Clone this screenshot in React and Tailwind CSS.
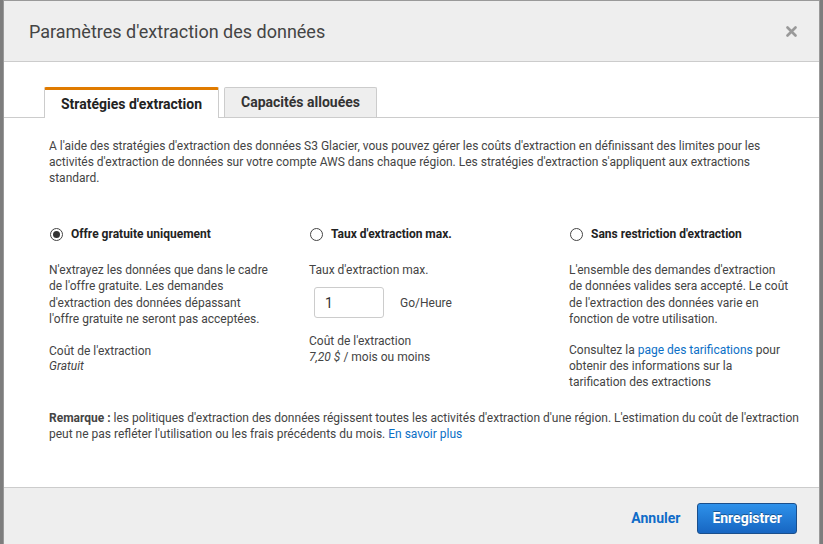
import React from 'react';

const font = { fontFamily: 'Roboto, "Noto Sans", Arial, sans-serif' };

function Radio({ checked }) {
  return (
    <span className="w-[13px] h-[13px] rounded-full border border-[#444] flex items-center justify-center shrink-0 bg-white">
      {checked && <span className="w-[7px] h-[7px] rounded-full bg-[#333]" />}
    </span>
  );
}

function Option({ checked, label, children }) {
  return (
    <div className="w-[260px] shrink-0">
      <div className="flex items-center gap-[8px] h-4 pl-px">
        <Radio checked={checked} />
        <span className="font-bold text-[#222]">{label}</span>
      </div>
      <div className="mt-5 w-[220px]">{children}</div>
    </div>
  );
}

export default function App() {
  return (
    <div className="w-[823px] h-[544px] overflow-hidden bg-[#7d7d7d] px-[3px]" style={font}>
      <div className="bg-white border border-[#999] h-[620px] flex flex-col text-[12px] text-[#444]">
        {/* Header */}
        <div className="h-[61px] shrink-0 bg-[#eeeeee] border-b border-[#ccc] flex items-center justify-between pl-[25px] pr-[22px]">
          <h1 className="text-[18px] text-[#444] font-normal">Paramètres d'extraction des données</h1>
          <svg width="11" height="11" viewBox="0 0 11 11" className="text-[#999]">
            <path d="M1.5 1.5 L9.5 9.5 M9.5 1.5 L1.5 9.5" stroke="currentColor" strokeWidth="2.6" strokeLinecap="round" />
          </svg>
        </div>

        {/* Tabs */}
        <div className="pt-[25px] border-b border-[#ccc] flex pl-10 gap-[5px]">
          <div className="h-[31px] -mb-px px-4 bg-white border-x border-[#ccc] border-t-[3px] border-t-[#e07b00] rounded-t-[2px] flex items-center text-[14px] font-bold text-[#222]">
            Stratégies d'extraction
          </div>
          <div className="h-[30px] px-4 bg-[#eeeeee] border border-b-0 border-[#ccc] rounded-t-[2px] flex items-center text-[14px] font-bold text-[#333]">
            Capacités allouées
          </div>
        </div>

        {/* Body */}
        <div className="pl-[45px] pr-[12px] pt-5 pb-[45px] border-b border-[#ccc] leading-4">
          <p className="pr-5">
            A l'aide des stratégies d'extraction des données S3 Glacier, vous pouvez gérer les coûts d'extraction en définissant des limites pour les activités d'extraction de données sur votre compte AWS dans chaque région. Les stratégies d'extraction s'appliquent aux extractions standard.
          </p>

          <div className="flex mt-10">
            <Option checked label="Offre gratuite uniquement">
              <p className="leading-[16.3px]">
                N'extrayez les données que dans le cadre de l'offre gratuite. Les demandes d'extraction des données dépassant l'offre gratuite ne seront pas acceptées.
              </p>
              <p className="mt-[17px] leading-[15px]">Coût de l'extraction</p>
              <p className="italic leading-[15px]">Gratuit</p>
            </Option>

            <Option label="Taux d'extraction max.">
              <p>Taux d'extraction max.</p>
              <div className="flex items-center gap-4 mt-[9px] pl-[5px]">
                <div className="w-[70px] h-[31px] border border-[#ccc] rounded-[3px] flex items-center pl-[10px] text-[14px] text-[#333]">
                  1
                </div>
                <span>Go/Heure</span>
              </div>
              <p className="mt-[15px]">Coût de l'extraction</p>
              <p>
                <span className="italic">7,20 $</span> / mois ou moins
              </p>
            </Option>

            <Option label="Sans restriction d'extraction">
              <p className="leading-[16.3px]">
                L'ensemble des demandes d'extraction de données valides sera accepté. Le coût de l'extraction des données varie en fonction de votre utilisation.
              </p>
              <p className="mt-[15px]">
                Consultez la <a className="text-[#0b6fc6]">page des tarifications</a> pour obtenir des informations sur la tarification des extractions
              </p>
            </Option>
          </div>

          <p className="mt-5">
            <span className="font-bold">Remarque :</span> les politiques d'extraction des données régissent toutes les activités d'extraction d'une région. L'estimation du coût de l'extraction peut ne pas refléter l'utilisation ou les frais précédents du mois. <a className="text-[#0b6fc6]">En savoir plus</a>
          </p>
        </div>

        {/* Footer */}
        <div className="h-[60px] shrink-0 bg-[#eeeeee] flex items-center justify-end gap-[17px] pr-[22px]">
          <button className="text-[14px] font-bold text-[#0f6bc8]">Annuler</button>
          <button className="h-[31px] px-[14px] rounded-[3px] border border-[#1a4f8c] bg-gradient-to-b from-[#2e91ea] to-[#1766c2] text-white text-[14px] font-bold [text-shadow:0_-1px_0_rgba(0,0,0,0.35)]">
            Enregistrer
          </button>
        </div>
      </div>
    </div>
  );
}
